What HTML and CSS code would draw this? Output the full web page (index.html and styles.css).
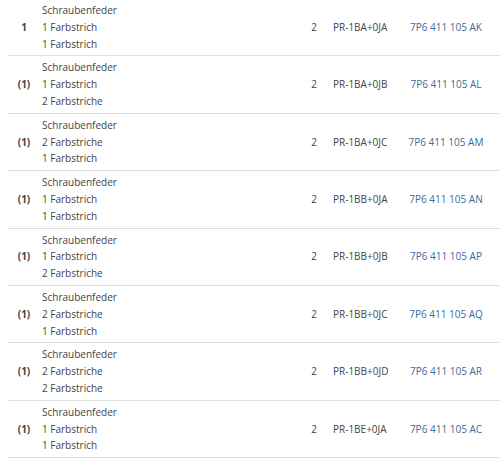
FILE: index.html
```html
<!DOCTYPE html>
<html lang="de">
<head>
<meta charset="utf-8">
<link rel="stylesheet" href="styles.css">
</head>
<body>
<div class="parts">
  <div class="row">
    <div class="num">1</div>
    <div class="desc"><div>Schraubenfeder</div><div>1 Farbstrich</div><div>1 Farbstrich</div></div>
    <div class="qty">2</div>
    <div class="pr">PR-1BA+0JA</div>
    <div class="part"><a href="#">7P6 411 105 AK</a></div>
  </div>
  <div class="row">
    <div class="num">(1)</div>
    <div class="desc"><div>Schraubenfeder</div><div>1 Farbstrich</div><div>2 Farbstriche</div></div>
    <div class="qty">2</div>
    <div class="pr">PR-1BA+0JB</div>
    <div class="part"><a href="#">7P6 411 105 AL</a></div>
  </div>
  <div class="row">
    <div class="num">(1)</div>
    <div class="desc"><div>Schraubenfeder</div><div>2 Farbstriche</div><div>1 Farbstrich</div></div>
    <div class="qty">2</div>
    <div class="pr">PR-1BA+0JC</div>
    <div class="part"><a href="#">7P6 411 105 AM</a></div>
  </div>
  <div class="row">
    <div class="num">(1)</div>
    <div class="desc"><div>Schraubenfeder</div><div>1 Farbstrich</div><div>1 Farbstrich</div></div>
    <div class="qty">2</div>
    <div class="pr">PR-1BB+0JA</div>
    <div class="part"><a href="#">7P6 411 105 AN</a></div>
  </div>
  <div class="row">
    <div class="num">(1)</div>
    <div class="desc"><div>Schraubenfeder</div><div>1 Farbstrich</div><div>2 Farbstriche</div></div>
    <div class="qty">2</div>
    <div class="pr">PR-1BB+0JB</div>
    <div class="part"><a href="#">7P6 411 105 AP</a></div>
  </div>
  <div class="row">
    <div class="num">(1)</div>
    <div class="desc"><div>Schraubenfeder</div><div>2 Farbstriche</div><div>1 Farbstrich</div></div>
    <div class="qty">2</div>
    <div class="pr">PR-1BB+0JC</div>
    <div class="part"><a href="#">7P6 411 105 AQ</a></div>
  </div>
  <div class="row">
    <div class="num">(1)</div>
    <div class="desc"><div>Schraubenfeder</div><div>2 Farbstriche</div><div>2 Farbstriche</div></div>
    <div class="qty">2</div>
    <div class="pr">PR-1BB+0JD</div>
    <div class="part"><a href="#">7P6 411 105 AR</a></div>
  </div>
  <div class="row">
    <div class="num">(1)</div>
    <div class="desc"><div>Schraubenfeder</div><div>1 Farbstrich</div><div>1 Farbstrich</div></div>
    <div class="qty">2</div>
    <div class="pr">PR-1BE+0JA</div>
    <div class="part"><a href="#">7P6 411 105 AC</a></div>
  </div>
</div>
</body>
</html>
```
FILE: styles.css
```css
html, body {
  background: #fff;
}
body {
  margin: 0 0 0 8px;
  font-family: "Open Sans", sans-serif;
  font-size: 10px;
  line-height: 16.8px;
  color: #444;
}
.parts {
  display: flex;
  flex-direction: column;
}
.row {
  display: grid;
  grid-template-columns: 32px 260px 28px 72px 92px;
  align-items: center;
  padding: 3px 0;
  border-bottom: 1px solid #dedede;
}
.row:first-child {
  padding-top: 2px;
}
.num {
  text-align: center;
  font-weight: 700;
}
.desc {
  padding-left: 2px;
}
.qty {
  text-align: center;
}
.pr {
  padding-left: 5px;
}
.part {
  text-align: center;
}
.part a {
  color: #3b6b9c;
  text-decoration: none;
}
```
